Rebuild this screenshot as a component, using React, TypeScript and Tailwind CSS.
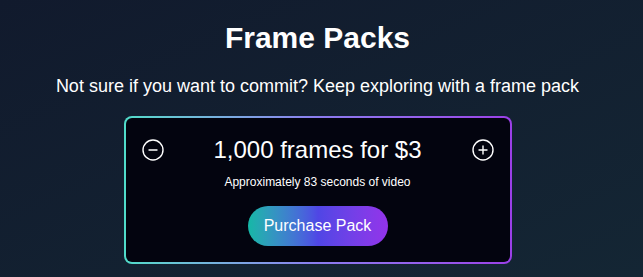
import { CirclePlus, CircleMinus } from "lucide-react";

const font = { fontFamily: '"Liberation Sans", Arial, sans-serif' };

/**
 * Stepper card for picking a frame pack.
 */
const PackCard = () => {
  return (
    <div className="rounded-lg bg-gradient-to-r from-[#4fdcc9] via-[#8b7cf0] to-[#9b3fe8] p-[2px] w-[388px]">
      <div className="rounded-[6px] bg-[#03040f] px-[15px] pt-4 pb-4 flex flex-col items-center">
        {/* Price row */}
        <div className="w-full flex items-center justify-between">
          <button className="text-white">
            <CircleMinus size={24} strokeWidth={1.4} />
          </button>
          <p className="text-white text-2xl leading-8">1,000 frames for $3</p>
          <button className="text-white">
            <CirclePlus size={24} strokeWidth={1.4} />
          </button>
        </div>
        <p className="text-white text-xs leading-4 mt-2">Approximately 83 seconds of video</p>
        <button className="mt-4 h-10 w-[140px] rounded-full bg-gradient-to-r from-[#14b8a6] via-[#4f46e5] to-[#9333ea] text-white text-base">
          Purchase Pack
        </button>
      </div>
    </div>
  );
};

export default function App() {
  return (
    <div
      style={font}
      className="w-[643px] h-[277px] overflow-hidden bg-gradient-to-br from-[#111a2d] to-[#142634]"
    >
      <div className="w-[635px] flex flex-col items-center pt-5">
        <h2 className="text-white text-3xl font-bold leading-9">Frame Packs</h2>
        <p className="text-white text-lg leading-7 mt-4">
          Not sure if you want to commit? Keep exploring with a frame pack
        </p>
        <div className="mt-4">
          <PackCard />
        </div>
      </div>
    </div>
  );
}
